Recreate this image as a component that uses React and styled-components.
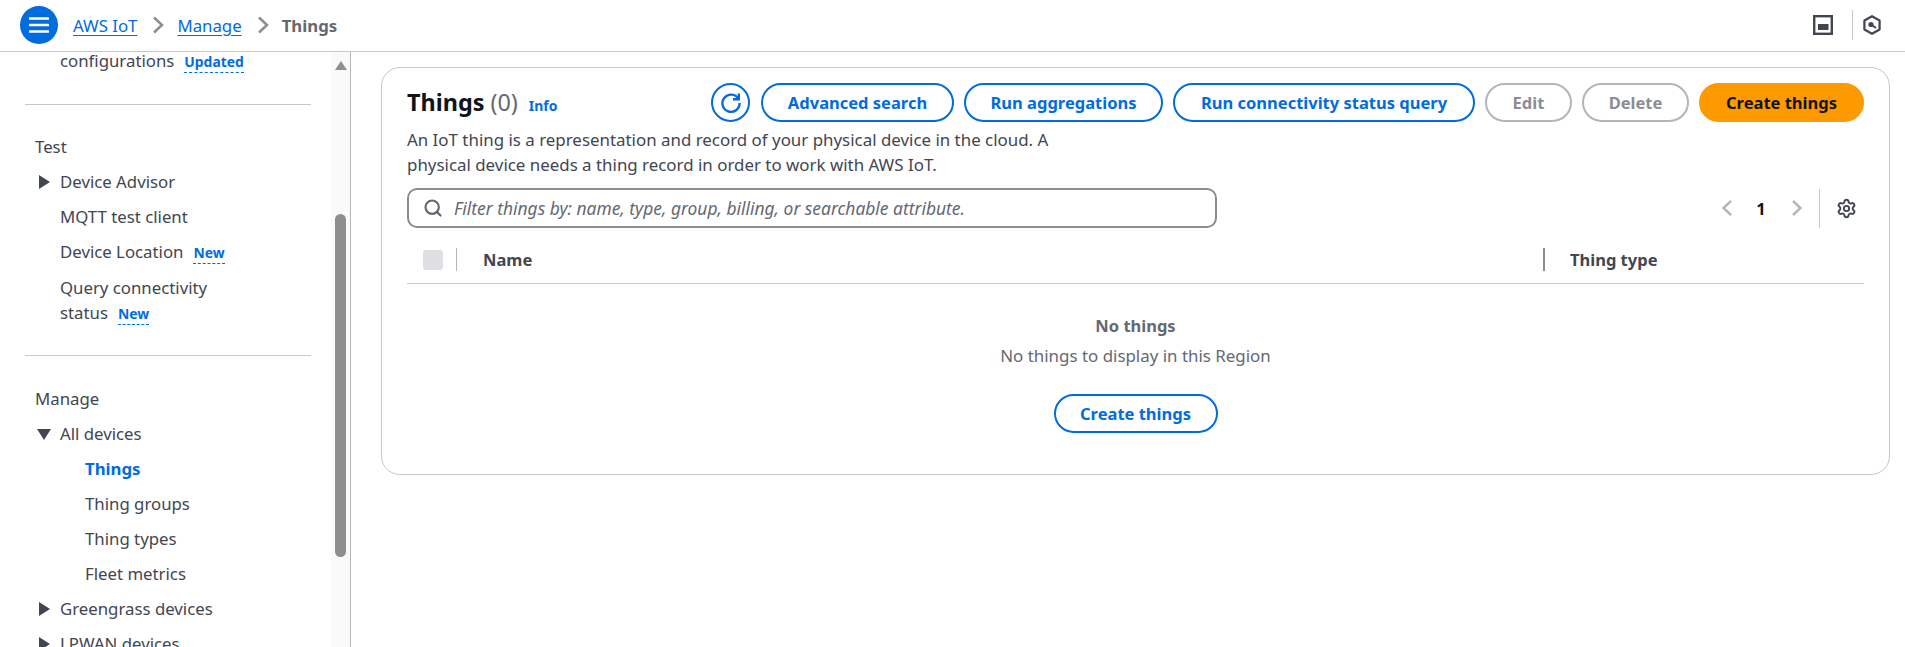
import React from "react";
import styled, { createGlobalStyle } from "styled-components";
import { Search, Settings } from "lucide-react";

const Global = createGlobalStyle`
  html, body { margin: 0; padding: 0; background: #fff; height: 100%; overflow: hidden; }
  body { font-family: "Noto Sans", "Open Sans", sans-serif; font-size: 16.9px; color: #424650; }
  * { box-sizing: border-box; }
`;

const Page = styled.div`
  width: 1905px; height: 647px; display: flex; flex-direction: column; overflow: hidden;
`;
const Header = styled.header`
  height: 52px; flex: none; display: flex; align-items: center; border-bottom: 1px solid #c6c6cd;
  padding: 0 24px 1px 20px;
`;
const MenuButton = styled.button`
  width: 38px; height: 38px; border-radius: 50%; border: 0; padding: 0; background: #006ce0;
  display: flex; align-items: center; justify-content: center; margin-right: 15px;
`;
const Crumbs = styled.nav`display: flex; align-items: center; flex: 1;`;
const CrumbLink = styled.a`
  color: #006ce0; text-decoration: underline; text-underline-offset: 3px; text-decoration-thickness: 1px;
  font-size: 16.8px;
`;
const CrumbSep = styled.svg`width: 12px; height: 18px; margin: 0 13px 0 15px; flex: none;`;
const CrumbCurrent = styled.span`color: #656871; font-weight: 700; font-size: 16.8px;`;
const PagerArrow = styled.svg`width: 12px; height: 16px; flex: none;`;
const HeaderTools = styled.div`display: flex; align-items: center;`;
const ToolDivider = styled.div`width: 1px; height: 30px; background: #c6c6cd; margin: 0 10px 0 19px;`;

const Body = styled.div`flex: 1; display: flex; min-height: 0;`;
const Sidebar = styled.aside`
  width: 351px; flex: none; display: flex; border-right: 1px solid #b4b4bb; overflow: hidden;
`;
const Nav = styled.div`width: 331px; flex: none; padding: 0 20px 0 25px; overflow: hidden;`;
const NavScroll = styled.div`margin-top: -4px;`;
const Track = styled.div`
  width: 19px; flex: none; background: #fafafa; padding: 9px 4px 0 4px; display: flex; flex-direction: column;
`;
const TrackArrow = styled.div`
  width: 0; height: 0; border-left: 6px solid transparent; border-right: 6px solid transparent;
  border-bottom: 9px solid #8e8e8e; margin-bottom: 144px;
`;
const Thumb = styled.div`width: 11px; height: 343px; background: #8e8e8e; border-radius: 6px;`;

const NavItem = styled.div`
  line-height: 25px; padding-left: ${p => p.$indent === 2 ? 60 : 35}px; margin-bottom: 10px; font-size: 16.8px;
  color: ${p => p.$active ? "#006ce0" : "#424650"}; font-weight: ${p => p.$active ? 700 : 400};
  position: relative; width: ${p => p.$narrow ? "240px" : "auto"};
`;
const NavHeading = styled.div`line-height: 25px; padding-left: 10px; margin-bottom: 10px; font-size: 16.8px;`;
const Caret = styled.span`
  position: absolute; left: 14px; top: 6px; width: 0; height: 0;
  ${p => p.$down
    ? "left: 12px; top: 8px; border-left: 7px solid transparent; border-right: 7px solid transparent; border-top: 11px solid #424650;"
    : "border-top: 7px solid transparent; border-bottom: 7px solid transparent; border-left: 11px solid #424650;"}
`;
const Badge = styled.span`
  color: #006ce0; font-weight: 700; font-size: 13.9px; border-bottom: 1px dashed #006ce0; margin-left: 10px;
  padding-bottom: 1px;
`;
const NavDivider = styled.hr`border: 0; border-top: 1px solid #c6c6cd; margin: ${p => p.$m}; `;

const Main = styled.main`flex: 1; padding: 15px 15px 0 30px; min-width: 0;`;
const Card = styled.section`
  height: 408px; border: 1px solid #c6c6cd; border-radius: 19px; padding: 15px 25px 0 25px;
`;
const TitleRow = styled.div`display: flex; justify-content: space-between; align-items: flex-start;`;
const TitleBlock = styled.div`display: flex; align-items: baseline; padding-top: 3px;`;
const Title = styled.h1`margin: 0; font-size: 23.4px; line-height: 32px; font-weight: 700; color: #0f141a;`;
const Count = styled.span`font-size: 23.4px; font-weight: 400; color: #656871; margin-left: 6px;`;
const InfoLink = styled.a`color: #006ce0; font-weight: 700; font-size: 13.9px; margin-left: 11px;`;
const Actions = styled.div`display: flex; gap: 10px;`;
const Button = styled.button`
  height: 39px; width: ${p => p.$w}px; padding: 0; border-radius: 20px; font: 700 16.5px "Noto Sans", sans-serif;
  background: ${p => p.$primary ? "#ff9900" : "#fff"};
  color: ${p => p.$primary ? "#0f141a" : p.$disabled ? "#8c8c94" : "#006ce0"};
  border: 2px solid ${p => p.$primary ? "#ff9900" : p.$disabled ? "#b4b4bb" : "#006ce0"};
  white-space: nowrap;
`;
const IconButton = styled.button`
  width: 39px; height: 39px; border-radius: 50%; border: 2px solid #006ce0; background: #fff; padding: 0;
  display: flex; align-items: center; justify-content: center; color: #006ce0; margin-right: 1px;
`;
const Description = styled.p`margin: 5px 0 0; width: 670px; line-height: 25px; font-size: 16.9px; color: #424650;`;
const FilterRow = styled.div`display: flex; justify-content: space-between; align-items: center; margin-top: 11px;`;
const SearchBox = styled.div`
  width: 810px; height: 40px; border: 2px solid #8c8c94; border-radius: 10px; display: flex; align-items: center;
  padding-left: 14px; gap: 11px; color: #656871;
`;
const Placeholder = styled.span`font-style: italic; font-size: 17.4px; color: #656871;`;
const Pager = styled.div`display: flex; align-items: center;`;
const PageNo = styled.span`font-weight: 700; color: #0f141a; font-size: 16.5px; width: 10px; text-align: center; margin: 0 25px 0 23px;`;
const PagerDivider = styled.div`width: 1px; height: 39px; background: #c6c6cd; margin: 0 16px 0 16px;`;
const GearWrap = styled.div`display: flex; color: #424650; margin-right: 7px;`;
const TableHead = styled.div`
  display: flex; align-items: center; height: 56px; border-bottom: 1px solid #c6c6cd; padding-top: 8px;
`;
const CheckCell = styled.div`display: flex; align-items: center; width: 76px; padding-left: 16px;`;
const CheckBox = styled.span`width: 20px; height: 20px; background: #dedee3; border-radius: 3px;`;
const Sep = styled.span`
  width: ${p => p.$dark ? 2 : 1}px; height: 23px; background: ${p => p.$dark ? "#8c8c94" : "#b4b4bb"};
  margin-left: ${p => p.$dark ? 0 : 13}px;
`;
const NameCell = styled.div`flex: 1; font-weight: 700; font-size: 16.5px; color: #424650;`;
const TypeCell = styled.div`width: 321px; display: flex; align-items: center; font-weight: 700; font-size: 16.5px; color: #424650;`;
const TypeLabel = styled.span`margin-left: 25px;`;
const Empty = styled.div`display: flex; flex-direction: column; align-items: center; padding-top: 29px; color: #656871; font-size: 16.9px;`;
const EmptyTitle = styled.div`font-weight: 700; font-size: 16.5px; line-height: 25px;`;
const EmptyText = styled.div`line-height: 25px; margin-top: 5px; margin-bottom: 26px;`;

const Chevron = () => (
  <CrumbSep viewBox="0 0 12 18">
    <path d="M2 1.5 L10 9 L2 16.5" fill="none" stroke="#8c8c94" strokeWidth="2.5" />
  </CrumbSep>
);
const PageArrow = ({ left }) => (
  <PagerArrow viewBox="0 0 12 16">
    <path d={left ? "M10 1 L2.5 8 L10 15" : "M2 1 L9.5 8 L2 15"} fill="none" stroke="#b4b4bb" strokeWidth="2.4" />
  </PagerArrow>
);

export default function App() {
  return (
    <Page>
      <Global />
      <Header>
        <MenuButton aria-label="Open navigation">
          <svg width="20" height="18" viewBox="0 0 20 18">
            <path d="M1 2.5H19M1 9H19M1 15.5H19" stroke="#fff" strokeWidth="2.6" strokeLinecap="round" />
          </svg>
        </MenuButton>
        <Crumbs>
          <CrumbLink>AWS IoT</CrumbLink>
          <Chevron />
          <CrumbLink>Manage</CrumbLink>
          <Chevron />
          <CrumbCurrent>Things</CrumbCurrent>
        </Crumbs>
        <HeaderTools>
          <svg width="20" height="20" viewBox="0 0 20 20">
            <rect x="1.2" y="1.2" width="17.6" height="17.6" fill="none" stroke="#424650" strokeWidth="2.4" />
            <rect x="5" y="9" width="10.5" height="6" fill="#424650" />
          </svg>
          <ToolDivider />
          <svg width="18" height="20" viewBox="0 0 18 20">
            <path d="M9 1.2 L16.6 5.5 V14.5 L9 18.8 L1.4 14.5 V5.5 Z" fill="none" stroke="#424650" strokeWidth="2.2" strokeLinejoin="round" />
            <circle cx="8" cy="9.5" r="2.6" fill="#424650" />
            <path d="M8 9.5 L13 13" stroke="#424650" strokeWidth="2" />
          </svg>
        </HeaderTools>
      </Header>
      <Body>
        <Sidebar>
          <Nav>
            <NavScroll>
              <NavItem>configurations<Badge>Updated</Badge></NavItem>
              <NavDivider $m="30px 0 29px" />
              <NavHeading>Test</NavHeading>
              <NavItem><Caret />Device Advisor</NavItem>
              <NavItem>MQTT test client</NavItem>
              <NavItem>Device Location<Badge>New</Badge></NavItem>
              <NavItem $narrow>Query connectivity status<Badge>New</Badge></NavItem>
              <NavDivider $m="29px 0 30px" />
              <NavHeading>Manage</NavHeading>
              <NavItem><Caret $down />All devices</NavItem>
              <NavItem $indent={2} $active>Things</NavItem>
              <NavItem $indent={2}>Thing groups</NavItem>
              <NavItem $indent={2}>Thing types</NavItem>
              <NavItem $indent={2}>Fleet metrics</NavItem>
              <NavItem><Caret />Greengrass devices</NavItem>
              <NavItem><Caret />LPWAN devices</NavItem>
            </NavScroll>
          </Nav>
          <Track>
            <TrackArrow />
            <Thumb />
          </Track>
        </Sidebar>
        <Main>
          <Card>
            <TitleRow>
              <TitleBlock>
                <Title>Things</Title>
                <Count>(0)</Count>
                <InfoLink>Info</InfoLink>
              </TitleBlock>
              <Actions>
                <IconButton aria-label="Refresh">
                  <svg width="22" height="22" viewBox="0 0 22 22" fill="none" stroke="#006ce0" strokeWidth="2.4">
                    <path d="M18.5 7 A8.6 8.6 0 1 0 19.6 11" />
                    <path d="M18.8 1.5 V7.2 H13" />
                  </svg>
                </IconButton>
                <Button $w={193}>Advanced search</Button>
                <Button $w={199}>Run aggregations</Button>
                <Button $w={302}>Run connectivity status query</Button>
                <Button $w={87} $disabled>Edit</Button>
                <Button $w={107} $disabled>Delete</Button>
                <Button $w={165} $primary>Create things</Button>
              </Actions>
            </TitleRow>
            <Description>An IoT thing is a representation and record of your physical device in the cloud. A physical device needs a thing record in order to work with AWS IoT.</Description>
            <FilterRow>
              <SearchBox>
                <Search size={20} strokeWidth={2.6} />
                <Placeholder>Filter things by: name, type, group, billing, or searchable attribute.</Placeholder>
              </SearchBox>
              <Pager>
                <PageArrow left />
                <PageNo>1</PageNo>
                <PageArrow />
                <PagerDivider />
                <GearWrap><Settings size={21} strokeWidth={2.2} /></GearWrap>
              </Pager>
            </FilterRow>
            <TableHead>
              <CheckCell><CheckBox /><Sep /></CheckCell>
              <NameCell>Name</NameCell>
              <TypeCell><Sep $dark /><TypeLabel>Thing type</TypeLabel></TypeCell>
            </TableHead>
            <Empty>
              <EmptyTitle>No things</EmptyTitle>
              <EmptyText>No things to display in this Region</EmptyText>
              <Button $w={164}>Create things</Button>
            </Empty>
          </Card>
        </Main>
      </Body>
    </Page>
  );
}
